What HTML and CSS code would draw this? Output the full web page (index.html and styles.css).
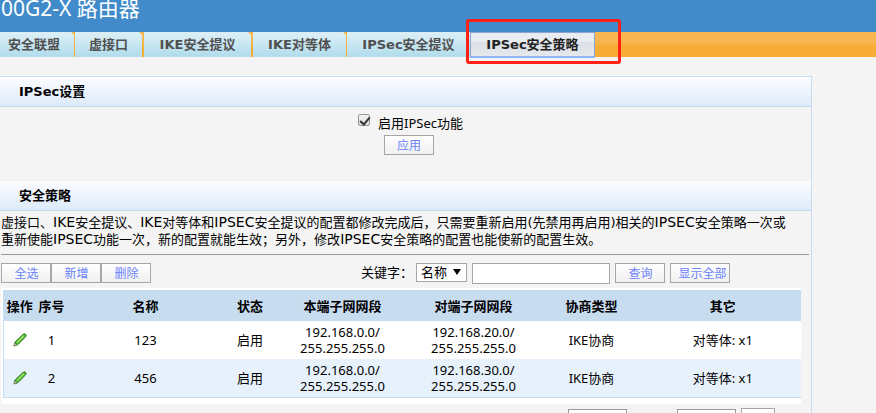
FILE: index.html
```html
<!DOCTYPE html>
<html lang="zh-CN">
<head>
<meta charset="utf-8">
<title>00G2-X 路由器</title>
<link rel="stylesheet" href="styles.css">
</head>
<body>
<header class="banner"><h1>00G2-X 路由器</h1></header>
<nav class="tabs">
  <a class="tab tab-first" href="#sa">安全联盟</a>
  <a class="tab tab-short" href="#vif">虚接口</a>
  <a class="tab" href="#ike">IKE安全提议</a>
  <a class="tab tab-peer" href="#peer">IKE对等体</a>
  <a class="tab tab-last" href="#proposal">IPSec安全提议</a>
  <a class="tab active" href="#policy" aria-current="page">IPSec安全策略<span class="marker"></span></a>
</nav>
<main class="panel">
  <h2 class="section-title">IPSec设置</h2>
  <form class="enable">
    <div class="enable-row">
      <input class="check" type="checkbox" id="enable" checked>
      <label for="enable">启用IPSec功能</label>
    </div>
    <button class="btn" type="button">应用</button>
  </form>
  <h2 class="section-title">安全策略</h2>
  <p class="note">虚接口、<span class="term">IKE</span>安全提议、<span class="term">IKE</span>对等体和<span class="term">IPSEC</span>安全提议的配置都修改完成后，只需要重新启用(先禁用再启用)相关的<span class="term">IPSEC</span>安全策略一次或<br>重新使能<span class="term">IPSEC</span>功能一次，新的配置就能生效；另外，修改<span class="term">IPSEC</span>安全策略的配置也能使新的配置生效。</p>
  <hr class="rule">
  <div class="toolbar">
    <div class="actions">
      <button class="btn" type="button">全选</button><button class="btn" type="button">新增</button><button class="btn" type="button">删除</button>
    </div>
    <div class="search">
      <label for="field">关键字：</label>
      <span class="select-box"><select id="field"><option>名称</option></select></span>
      <input class="keyword" type="text" aria-label="关键字">
      <button class="btn" type="button">查询</button>
      <button class="btn btn-wide" type="button">显示全部</button>
    </div>
  </div>
  <div class="table-wrap">
    <table class="policies">
      <colgroup><col class="c-op"><col class="c-no"><col class="c-name"><col class="c-state"><col class="c-local"><col class="c-remote"><col class="c-type"><col></colgroup>
      <thead>
        <tr><th>操作</th><th>序号</th><th>名称</th><th>状态</th><th>本端子网网段</th><th>对端子网网段</th><th>协商类型</th><th>其它</th></tr>
      </thead>
      <tbody>
        <tr>
          <td><a href="#edit1" aria-label="编辑"><svg class="pencil" viewBox="0 0 14 14"><path d="M1 13 2 9 10 1.4Q11.500 .2 12.700 1.400 13.700 2.700 12.500 4L4.700 11.700Z" fill="#4fb52a" stroke="#2f7d32"/><path d="M4 9.500 10.800 2.800" stroke="#a2e468" stroke-width="1.500"/><path d="M1 13 2 10 4 11.700Z" fill="#e3d9b2" stroke="#67775a" stroke-width=".6"/></svg></a></td>
          <td>1</td><td>123</td><td>启用</td><td>192.168.0.0/<br>255.255.255.0</td><td>192.168.20.0/<br>255.255.255.0</td><td>IKE协商</td><td>对等体: x1</td>
        </tr>
        <tr>
          <td><a href="#edit2" aria-label="编辑"><svg class="pencil" viewBox="0 0 14 14"><path d="M1 13 2 9 10 1.4Q11.500 .2 12.700 1.400 13.700 2.700 12.500 4L4.700 11.700Z" fill="#4fb52a" stroke="#2f7d32"/><path d="M4 9.500 10.800 2.800" stroke="#a2e468" stroke-width="1.500"/><path d="M1 13 2 10 4 11.700Z" fill="#e3d9b2" stroke="#67775a" stroke-width=".6"/></svg></a></td>
          <td>2</td><td>456</td><td>启用</td><td>192.168.0.0/<br>255.255.255.0</td><td>192.168.30.0/<br>255.255.255.0</td><td>IKE协商</td><td>对等体: x1</td>
        </tr>
      </tbody>
    </table>
  </div>
  <div class="pager">
    <input class="page-box" type="text" aria-label="每页">
    <input class="page-box page-number" type="text" aria-label="页码">
    <button class="btn btn-go" type="button" aria-label="跳转"></button>
  </div>
</main>
</body>
</html>
```
FILE: styles.css
```css
* { box-sizing: border-box; }

body {
  margin: 0;
  height: 100vh;
  overflow: hidden;
  background: #f4f4f4;
  color: #000;
  font: 13px/17px "DejaVu Sans", "Noto Sans CJK SC", sans-serif;
}

.banner {
  height: 32px;
  background: #418bca;
  color: #fff;
}

.banner h1 {
  margin: 0;
  padding-left: 1px;
  font: 21px/16px "Noto Sans", "Noto Sans CJK SC", sans-serif;
}

.tabs {
  display: flex;
  height: 25px;
  background: linear-gradient(#f8b650 45%, #f7ad35 55%);
}

.tab {
  position: relative;
  width: 107px;
  margin-right: 2px;
  border-top: 1px solid #d9eef4;
  background: linear-gradient(#dceff6, #b0dcec);
  color: #505050;
  font-weight: bold;
  line-height: 24px;
  text-align: center;
  text-decoration: none;
  white-space: nowrap;
}

/* small notch where two tabs meet */
.tab:nth-child(-n+4)::after {
  content: "";
  position: absolute;
  top: -1px;
  right: -3px;
  border: solid transparent;
  border-width: 3px 3px 0;
  border-top-color: #f8b650;
}

.tab-first { width: 74px; margin-right: 1px; padding-right: 6px; }
.tab-short { width: 67px; }
.tab-peer { width: 93px; margin-right: 1px; }
.tab-last { width: 123px; margin-right: 0; }

.tab.active {
  width: 125px;
  height: 26px;
  margin: 0;
  border: 1px solid #8ba6d3;
  border-bottom: 2px solid #91b4f4;
  background: linear-gradient(#e9edf2 40%, #dce0e6 41%, #e5e9ec);
  color: #222;
  line-height: 23px;
}

.marker {
  position: absolute;
  top: -14px;
  left: -5px;
  width: 155px;
  height: 45px;
  border: 3px solid #ff2116;
  border-radius: 3px;
}

.panel {
  max-width: 812px;
  margin-top: 19px;
  border: 1px solid #c8dcf0;
  border-left: 0;
}

.section-title {
  height: 30px;
  margin: 0;
  padding-left: 19px;
  border-bottom: 1px solid #c8dcf0;
  background: linear-gradient(#fbfdff, #edf3fd 50%, #dceafa);
  font-size: 13px;
  line-height: 30px;
}

.enable {
  display: flex;
  flex-direction: column;
  align-items: center;
  height: 74px;
  padding: 6px 0 0 6px;
}

.enable-row {
  display: flex;
  gap: 8px;
  height: 22px;
  padding-left: 4px;
  font-family: "Noto Sans", "Noto Sans CJK SC", sans-serif;
  line-height: 20px;
}

.check {
  appearance: none;
  width: 12px;
  height: 12px;
  margin: 1px 0 0;
  border: 1px solid #969696;
  border-radius: 2px;
  background: linear-gradient(#f2f2f2, #dedede);
}

.check::after {
  content: "";
  display: block;
  width: 4px;
  height: 8px;
  margin: 0 0 0 3px;
  border: solid #333;
  border-width: 0 2px 2px 0;
  transform: rotate(40deg);
}

.btn {
  width: 50px;
  height: 20px;
  padding: 1px 0 0 1px;
  border: 1px solid #a6a6a6;
  background: linear-gradient(#fff, #f0f0f0);
  color: #6b83fa;
  font: 12px/18px "DejaVu Sans", "Noto Sans CJK SC", sans-serif;
  white-space: nowrap;
}

.enable .btn { flex: none; }
.btn-wide { width: 60px; padding-left: 5px; }

.note {
  margin: 0;
  padding: 3px 0 0 1px;
  white-space: nowrap;
}

.term { font-size: 14px; }

.rule {
  height: 1px;
  margin: 6px 2px 8px 1px;
  border: 0;
  background: #999;
}

.toolbar {
  display: flex;
  justify-content: space-between;
  height: 25px;
  padding: 0 81px 0 1px;
}

.actions { display: flex; }

.search {
  display: flex;
  gap: 5px;
  line-height: 20px;
}

.search label { margin-right: -2px; }

.select-box { position: relative; height: 19px; }

.select-box select {
  appearance: none;
  display: block;
  width: 51px;
  height: 19px;
  padding: 0 4px;
  border: 1px solid #a6a6a6;
  background: #fff;
  color: #000;
  font: 13px/17px "DejaVu Sans", "Noto Sans CJK SC", sans-serif;
}

.select-box::after {
  content: "";
  position: absolute;
  top: 6px;
  right: 6px;
  border: solid transparent;
  border-width: 6px 4px 0;
  border-top-color: #000;
}

.keyword {
  width: 138px;
  height: 21px;
  border: 1px solid #a6a6a6;
  background: #fff;
}

.table-wrap {
  margin: 0 10px 0 1px;
  padding: 2px 0 6px 2px;
  background: #fff;
}

.policies {
  width: 100%;
  table-layout: fixed;
  border-collapse: collapse;
  border: 1px solid #c8dcf0;
  border-width: 0 0 1px 1px;
  font: 13px/16px "Noto Sans", "Noto Sans CJK SC", sans-serif;
  text-align: center;
}

.policies th, .policies td { padding: 0; white-space: nowrap; }
.policies th { height: 31px; background: #c8dcf0; }
.policies td { height: 38px; }
.policies tbody tr:nth-child(2) { background: #e7f1fc; }

.c-op, .c-no { width: 32px; }
.c-name { width: 156px; }
.c-state { width: 53px; }
.c-local { width: 132px; }
.c-remote { width: 130px; }
.c-type { width: 106px; }

.pencil { display: block; width: 14px; height: 14px; margin: 0 auto; fill: none; }

.pager {
  display: flex;
  justify-content: flex-end;
  gap: 5px;
  padding: 4px 36px 4px 0;
}

.page-box {
  width: 59px;
  height: 20px;
  margin: 1px 0 0;
  border: 1px solid #999;
  background: #fff;
}

.page-number { margin-left: 45px; }
.btn-go { width: 34px; }
```
